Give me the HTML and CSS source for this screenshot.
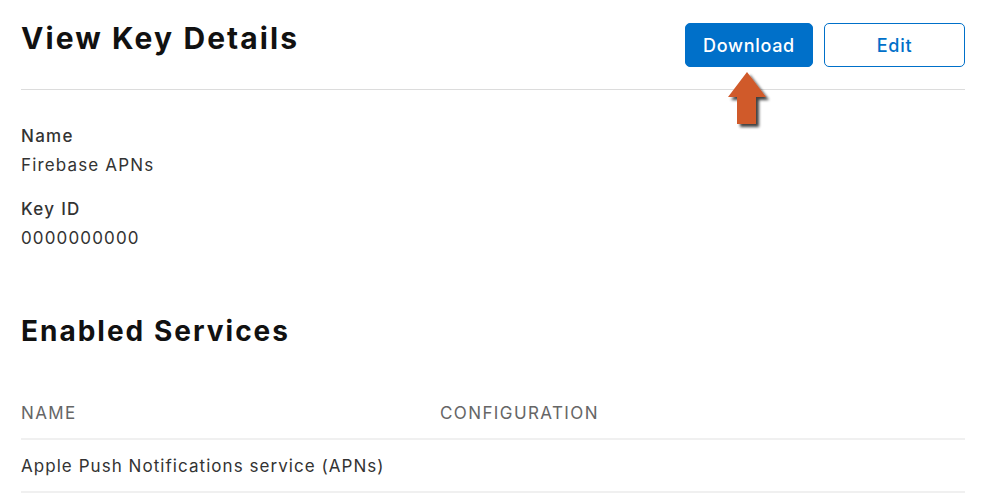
FILE: index.html
```html
<!DOCTYPE html>
<html lang="en">
<head>
<meta charset="utf-8">
<title>View Key Details</title>
<link rel="stylesheet" href="styles.css">
</head>
<body>
<main class="page">
  <header class="page-header">
    <h1 class="title">View Key Details</h1>
    <div class="actions">
      <div class="download-wrap">
        <button class="btn btn-primary">Download</button>
        <svg class="arrow" width="48" height="62" viewBox="0 0 48 62" aria-hidden="true">
          <defs>
            <filter id="sh" x="-30%" y="-30%" width="160%" height="160%">
              <feGaussianBlur in="SourceAlpha" stdDeviation="1.5"/>
              <feOffset dx="3" dy="3" result="o"/>
              <feComponentTransfer><feFuncA type="linear" slope="0.75"/></feComponentTransfer>
              <feMerge><feMergeNode/><feMergeNode in="SourceGraphic"/></feMerge>
            </filter>
          </defs>
          <path d="M19 0 L38 25 L28 25 L28 52 L9 52 L9 25 L0 25 Z" fill="#d05a2b" filter="url(#sh)"/>
        </svg>
      </div>
      <button class="btn btn-secondary">Edit</button>
    </div>
  </header>

  <section class="details">
    <div class="field">
      <div class="label">Name</div>
      <div class="value">Firebase APNs</div>
    </div>
    <div class="field">
      <div class="label">Key ID</div>
      <div class="value">0000000000</div>
    </div>
  </section>

  <h2 class="section-title">Enabled Services</h2>

  <div class="table">
    <div class="row head">
      <div class="cell name">NAME</div>
      <div class="cell config">CONFIGURATION</div>
    </div>
    <div class="row">
      <div class="cell name">Apple Push Notifications service (APNs)</div>
      <div class="cell config"></div>
    </div>
  </div>
</main>
</body>
</html>
```

FILE: styles.css
```css
* { box-sizing: border-box; }
html, body { margin: 0; padding: 0; background: #fff; }
body {
  font-family: Inter, "Liberation Sans", Arial, sans-serif;
  color: #333;
}
.page {
  padding: 0 21px;
}
.page-header {
  display: flex;
  justify-content: space-between;
  align-items: flex-start;
  padding-top: 23px;
  height: 90px;
  border-bottom: 1px solid #dcdcdc;
}
.title {
  margin: 0;
  margin-top: -3px;
  font-size: 30px;
  font-weight: 700;
  line-height: 36px;
  color: #111;
  letter-spacing: 2.1px;
}
.actions {
  display: flex;
  gap: 11px;
}
.download-wrap {
  position: relative;
}
.btn {
  height: 44px;
  border-radius: 5px;
  font-family: inherit;
  font-size: 18px;
  font-weight: 500;
  letter-spacing: 0.7px;
  cursor: pointer;
}
.btn-primary {
  width: 128px;
  background: #0070c9;
  border: 1px solid #0070c9;
  color: #fff;
}
.btn-secondary {
  width: 141px;
  background: #fff;
  border: 1px solid #0070c9;
  color: #0070c9;
}
.arrow {
  position: absolute;
  left: 43px;
  top: 49px;
}
.details {
  padding-top: 32px;
  padding-bottom: 15px;
}
.field + .field {
  margin-top: 15px;
}
.label {
  font-size: 17px;
  font-weight: 500;
  line-height: 29px;
  color: #333;
  letter-spacing: 1.3px;
}
.value {
  font-size: 17px;
  line-height: 29px;
  color: #333;
  letter-spacing: 1.15px;
}
.section-title {
  margin: 46px 0 0;
  font-size: 28px;
  font-weight: 700;
  line-height: 34px;
  color: #111;
  letter-spacing: 2px;
}
.table {
  margin-top: 52px;
}
.row {
  display: flex;
  border-bottom: 2px solid #f0f0f0;
  height: 53px;
  align-items: center;
}
.row.head {
  height: 40px;
  align-items: flex-start;
  padding-top: 1px;
}
.cell {
  font-size: 17px;
  line-height: 24px;
  color: #333;
  letter-spacing: 1.05px;
}
.row.head .cell {
  color: #666;
  letter-spacing: 1.4px;
}
.cell.name { width: 419px; }
.cell.config { flex: 1; }
```
